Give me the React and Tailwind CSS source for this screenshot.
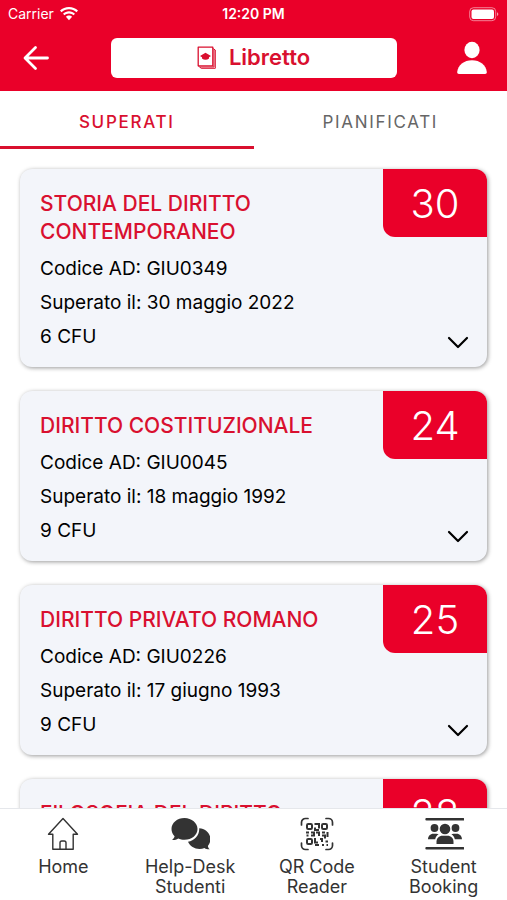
import React, { useState } from 'react';

const exams = [
  { id: 1, name: 'STORIA DEL DIRITTO CONTEMPORANEO', code: 'GIU0349', date: '30 maggio 2022', cfu: 6, grade: 30 },
  { id: 2, name: 'DIRITTO COSTITUZIONALE', code: 'GIU0045', date: '18 maggio 1992', cfu: 9, grade: 24 },
  { id: 3, name: 'DIRITTO PRIVATO ROMANO', code: 'GIU0226', date: '17 giugno 1993', cfu: 9, grade: 25 },
  { id: 4, name: 'FILOSOFIA DEL DIRITTO', code: 'GIU0112', date: '20 giugno 1993', cfu: 9, grade: 28 },
];

const WifiIcon = () => (
  <svg width="18" height="14" viewBox="0 0 18 14" fill="white">
    <path d="M9 0C5.500 0 2.400 1.300 0 3.600L1.500 5.200C3.500 3.300 6.100 2.200 9 2.200s5.500 1.100 7.500 3L18 3.600C15.600 1.300 12.500 0 9 0z" />
    <path d="M9 4.300c-2.300 0-4.400.9-6 2.400l1.500 1.600C5.700 7.200 7.300 6.500 9 6.500s3.300.7 4.500 1.800L15 6.700c-1.600-1.500-3.700-2.400-6-2.400z" />
    <path d="M9 8.600c-1.200 0-2.300.5-3.100 1.200L9 13.200l3.100-3.400C11.300 9.100 10.200 8.600 9 8.600z" />
  </svg>
);

const BatteryIcon = () => (
  <svg width="30" height="15" viewBox="0 0 30 15" fill="none">
    <rect x="0.700" y="0.700" width="26" height="13" rx="3.800" stroke="white" strokeOpacity="0.500" />
    <rect x="2.500" y="2.500" width="22.500" height="9.500" rx="2" fill="white" />
    <path d="M28 5.300c1.800.5 1.800 3.300 0 3.800z" fill="white" fillOpacity="0.600" />
  </svg>
);

const BackIcon = () => (
  <svg width="30" height="26" viewBox="0 0 30 26" fill="none" stroke="white" strokeWidth="2.800" strokeLinecap="round" strokeLinejoin="round">
    <path d="M15.500 2.500L5 13l10.500 10.500M5.500 13H27.500" />
  </svg>
);

const UserIcon = () => (
  <svg width="30" height="34" viewBox="0 0 30 34" fill="white">
    <ellipse cx="15" cy="9" rx="7.600" ry="8.200" />
    <path d="M2 33C.8 33 .1 32.200.2 31 .9 24 7 19.200 15 19.200S29.100 24 29.800 31c.1 1.200-.6 2-1.800 2z" />
  </svg>
);

const BookIcon = () => (
  <svg width="20" height="24" viewBox="0 0 20 24" fill="none" stroke="#d9102f" strokeWidth="1.300" strokeLinejoin="round">
    <path d="M1.200 1.200h14.600v18.600H1.200z" />
    <path d="M15.800 2.400l2.500 1.600v18.300H4.200L1.200 19.800M17 3.500v17.500H3" strokeWidth="1" />
    <path d="M8.500 6.800L3 9.900l2 1.300v1.400c2 1.600 5 1.600 7 0v-1.400l2-1.300z" fill="#d9102f" stroke="none" />
  </svg>
);

const ChevronIcon = () => (
  <svg width="22" height="14" viewBox="0 0 22 14" fill="none" stroke="black" strokeWidth="2.200" strokeLinecap="round" strokeLinejoin="round">
    <path d="M2 3l9 9 9-9" />
  </svg>
);

const HomeIcon = () => (
  <svg width="32" height="34" viewBox="0 0 32 34" fill="none" stroke="#333" strokeWidth="1.400" strokeLinejoin="round">
    <path d="M16 1.500L1.500 17.300h4.300v15h20.400v-15h4.300z" />
    <path d="M13 32.300v-6.500c0-1.200.6-1.800 1.800-1.800h2.400c1.200 0 1.800.6 1.800 1.800v6.500" />
  </svg>
);

const ChatIcon = () => (
  <svg width="40" height="34" viewBox="-1 0 40 34" fill="#333">
    <path d="M13.500 1C6.300 1 .5 5.900.5 12c0 2.800 1.200 5.300 3.100 7.300-.3 1.400-1.200 2.700-2.500 3.600 2.100.2 4.300-.3 6.100-1.500 1.900.9 4 1.400 6.300 1.400 7.200 0 13-4.800 13-10.800S20.700 1 13.500 1z" />
    <path d="M28.200 11.300c.5 7-4.800 12.300-11.200 13.500 1.900 4.500 6.500 7.200 11.500 7.200 1.800 0 3.500-.4 5-1.100 1.500 1.200 3.300 1.600 5.300 1.400-1.100-.9-1.700-2-1.900-3.400 1.600-1.800 2.500-4.100 2.500-6.700 0-5.600-4.600-10.500-11.200-10.900z" />
  </svg>
);

const QrIcon = () => (
  <svg width="34" height="34" viewBox="0 0 34 34" fill="none" stroke="#333" strokeWidth="1.700">
    <path strokeLinecap="round" d="M1.500 8V5.500a4 4 0 0 1 4-4H8M26 1.500h2.500a4 4 0 0 1 4 4V8M32.500 26v2.500a4 4 0 0 1-4 4H26M8 32.500H5.500a4 4 0 0 1-4-4V26" />
    <rect x="7" y="7" width="5" height="5" rx="1.200" strokeWidth="2" />
    <rect x="22" y="7" width="5" height="5" rx="1.200" strokeWidth="2" />
    <rect x="7" y="22" width="5" height="5" rx="1.200" strokeWidth="2" />
    <path strokeWidth="2" d="M14.500 7H19v4.500M15 10.500v2.500h4M6 15.500h3M11 15.500h3v3h-3M6.500 18.500h2M16 15.500h3v3.500M22 15.500h3M27.500 15v5M22 18.500h3v3M15 21v4.500h3M20 22h2v3M15 28h4M22 28h2M25.500 24.500h2.500M26.500 28h1.500" />
  </svg>
);

const BookingIcon = () => (
  <svg width="40" height="34" viewBox="-1 0 40 34" fill="#333">
    <path d="M1.500 2.300h37M1.500 31.300h37" stroke="#333" strokeWidth="2.400" strokeLinecap="round" />
    <circle cx="9.500" cy="11" r="3.900" />
    <circle cx="30.500" cy="11" r="3.900" />
    <circle cx="20" cy="12" r="5.300" />
    <path d="M3 22.300c0-3.300 2.300-5.600 5.300-5.600h3.200c.8 0 1.500.2 2.100.5-2 1.300-3 3-3.400 5.100zM37 22.300c0-3.300-2.300-5.600-5.300-5.600h-3.200c-.8 0-1.500.2-2.100.5 2 1.300 3 3 3.400 5.100z" />
    <path d="M11.500 27v-2.200c0-3.500 2.500-6 6-6h5c3.500 0 6 2.500 6 6V27z" />
  </svg>
);

const navItems = [
  { label: 'Home', Icon: HomeIcon },
  { label: 'Help-Desk Studenti', Icon: ChatIcon },
  { label: 'QR Code Reader', Icon: QrIcon },
  { label: 'Student Booking', Icon: BookingIcon },
];

const ExamCard = ({ exam }) => (
  <article className="flex shrink-0 items-stretch justify-between rounded-xl bg-[#f3f5fa] shadow-[1px_1px_4px_rgba(0,0,0,0.4)]">
    <div className="min-w-0 pt-[21px] pb-[13px] pl-5 text-[19px] leading-[34px] text-black">
      <h2 className="mb-1.5 max-w-72 text-[21px] leading-7 font-medium text-[#d9102f]">{exam.name}</h2>
      <p>Codice AD: {exam.code}</p>
      <p>Superato il: {exam.date}</p>
      <p>{exam.cfu} CFU</p>
    </div>
    <div className="flex shrink-0 flex-col items-end justify-between">
      <div className="flex h-[68px] w-26 items-center justify-center rounded-tr-xl rounded-bl-xl bg-[#ea0029] pt-0.5 text-[40px] font-light text-white">
        {exam.grade}
      </div>
      <button type="button" aria-label="Dettagli" className="mr-3 mb-3 p-1.5">
        <ChevronIcon />
      </button>
    </div>
  </article>
);

const App = () => {
  const [tab, setTab] = useState('superati');

  const tabClass = (name) =>
    `h-full flex-1 border-b-3 pt-2 text-[17px] tracking-widest ${
      tab === name ? 'border-[#d9102f] font-medium text-[#d9102f]' : 'border-transparent text-[#666]'
    }`;

  return (
    <div className="flex h-screen flex-col bg-white font-['Inter',sans-serif]">
      <header className="shrink-0 bg-[#ea0029] text-white">
        <div className="grid h-7 grid-cols-3 items-center px-2 text-sm">
          <div className="flex items-center gap-1.5">
            <span>Carrier</span>
            <WifiIcon />
          </div>
          <span className="text-center font-semibold">12:20 PM</span>
          <div className="flex justify-end">
            <BatteryIcon />
          </div>
        </div>
        <div className="flex h-[63px] items-center justify-between px-5 pb-1">
          <button type="button" aria-label="Indietro" className="w-20">
            <BackIcon />
          </button>
          <h1 className="flex h-10 max-w-[286px] flex-1 items-center justify-center gap-3 rounded-md bg-white text-[22px] font-semibold text-[#d9102f]">
            <BookIcon />
            Libretto
          </h1>
          <button type="button" aria-label="Profilo" className="flex w-20 justify-end">
            <UserIcon />
          </button>
        </div>
      </header>

      <div className="flex h-[58px] shrink-0">
        <button type="button" className={tabClass('superati')} onClick={() => setTab('superati')}>
          SUPERATI
        </button>
        <button type="button" className={tabClass('pianificati')} onClick={() => setTab('pianificati')}>
          PIANIFICATI
        </button>
      </div>

      <main className="flex min-h-0 flex-1 flex-col gap-6 overflow-y-auto px-5 py-5 [scrollbar-width:none]">
        {tab === 'superati' && exams.map((exam) => <ExamCard key={exam.id} exam={exam} />)}
      </main>

      <nav className="grid h-[92px] shrink-0 grid-cols-4 border-t border-gray-200 bg-white">
        {navItems.map(({ label, Icon }) => (
          <a key={label} href="#" className="flex flex-col items-center gap-1.5 px-4 pt-2 text-center text-lg leading-5 text-[#333]">
            <Icon />
            {label}
          </a>
        ))}
      </nav>
    </div>
  );
};

export default App;
